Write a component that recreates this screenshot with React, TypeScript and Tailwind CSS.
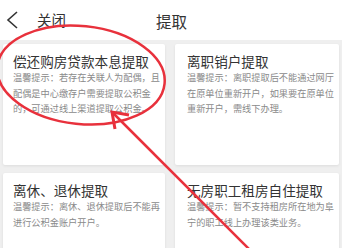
import React from "react";

type CardProps = { title: string; lines: string[]; pad: string };

function Card({ title, lines, pad }: CardProps) {
  return (
    <div className={`bg-white h-[121px] rounded-[2px] shadow-[0_1px_3px_rgba(0,0,0,0.08)] pt-[9px] ${pad}`}>
      <div className="text-[13.6px] leading-[17px] text-[#333333] whitespace-nowrap">{title}</div>
      {lines.map((l, i) => (
        <div key={i} className="text-[9.2px] leading-[15.5px] text-[#8a8a8a] whitespace-nowrap">
          {l}
        </div>
      ))}
    </div>
  );
}

export default function App() {
  return (
    <div
      className="relative w-[342px] h-[248px] overflow-hidden bg-[#efefef]"
      style={{ fontFamily: '"Noto Sans CJK SC", "Noto Sans", sans-serif' }}
    >
      <div className="h-[40px] bg-white flex items-center relative">
        <svg width="14" height="20" viewBox="0 0 14 20" className="ml-[5px]">
          <polyline points="12,2 3,10 12,18" fill="none" stroke="#333" strokeWidth="1.6" />
        </svg>
        <span className="ml-[18px] text-[14.5px] text-[#333]">关闭</span>
        <span className="absolute left-[156px] top-[10px] text-[15.5px] text-[#333]">提取</span>
      </div>
      <div className="grid grid-cols-[162px_164px] gap-x-[10px] gap-y-[8px] pl-[3px] pt-[4px]">
        <Card
          pad="pl-[10px]"
          title="偿还购房贷款本息提取"
          lines={["温馨提示：若存在关联人为配偶，且", "配偶是中心缴存户需要提取公积金", "的，可通过线上渠道提取公积金。"]}
        />
        <Card
          pad="pl-[12px]"
          title="离职销户提取"
          lines={["温馨提示：离职提取后不能通过网厅", "在原单位重新开户，如果要在原单位", "重新开户，需线下办理。"]}
        />
        <Card
          pad="pl-[10px]"
          title="离休、退休提取"
          lines={["温馨提示：离休、退休提取后不能再", "进行公积金账户开户。"]}
        />
        <Card
          pad="pl-[12px]"
          title="无房职工租房自住提取"
          lines={["温馨提示：暂不支持租房所在地为阜", "宁的职工线上办理该类业务。"]}
        />
      </div>
      <svg
        className="absolute left-0 top-0 pointer-events-none"
        width="342"
        height="248"
        viewBox="0 0 342 248"
      >
        <ellipse
          cx="81"
          cy="75"
          rx="84"
          ry="49"
          transform="rotate(6 81 75)"
          fill="none"
          stroke="#e8313c"
          strokeWidth="2.5"
        />
        <line x1="113" y1="113" x2="252" y2="252" stroke="#e8313c" strokeWidth="2.5" />
        <polyline points="129,115 112,112 115,129" fill="none" stroke="#e8313c" strokeWidth="3" strokeLinejoin="miter" />
      </svg>
    </div>
  );
}
